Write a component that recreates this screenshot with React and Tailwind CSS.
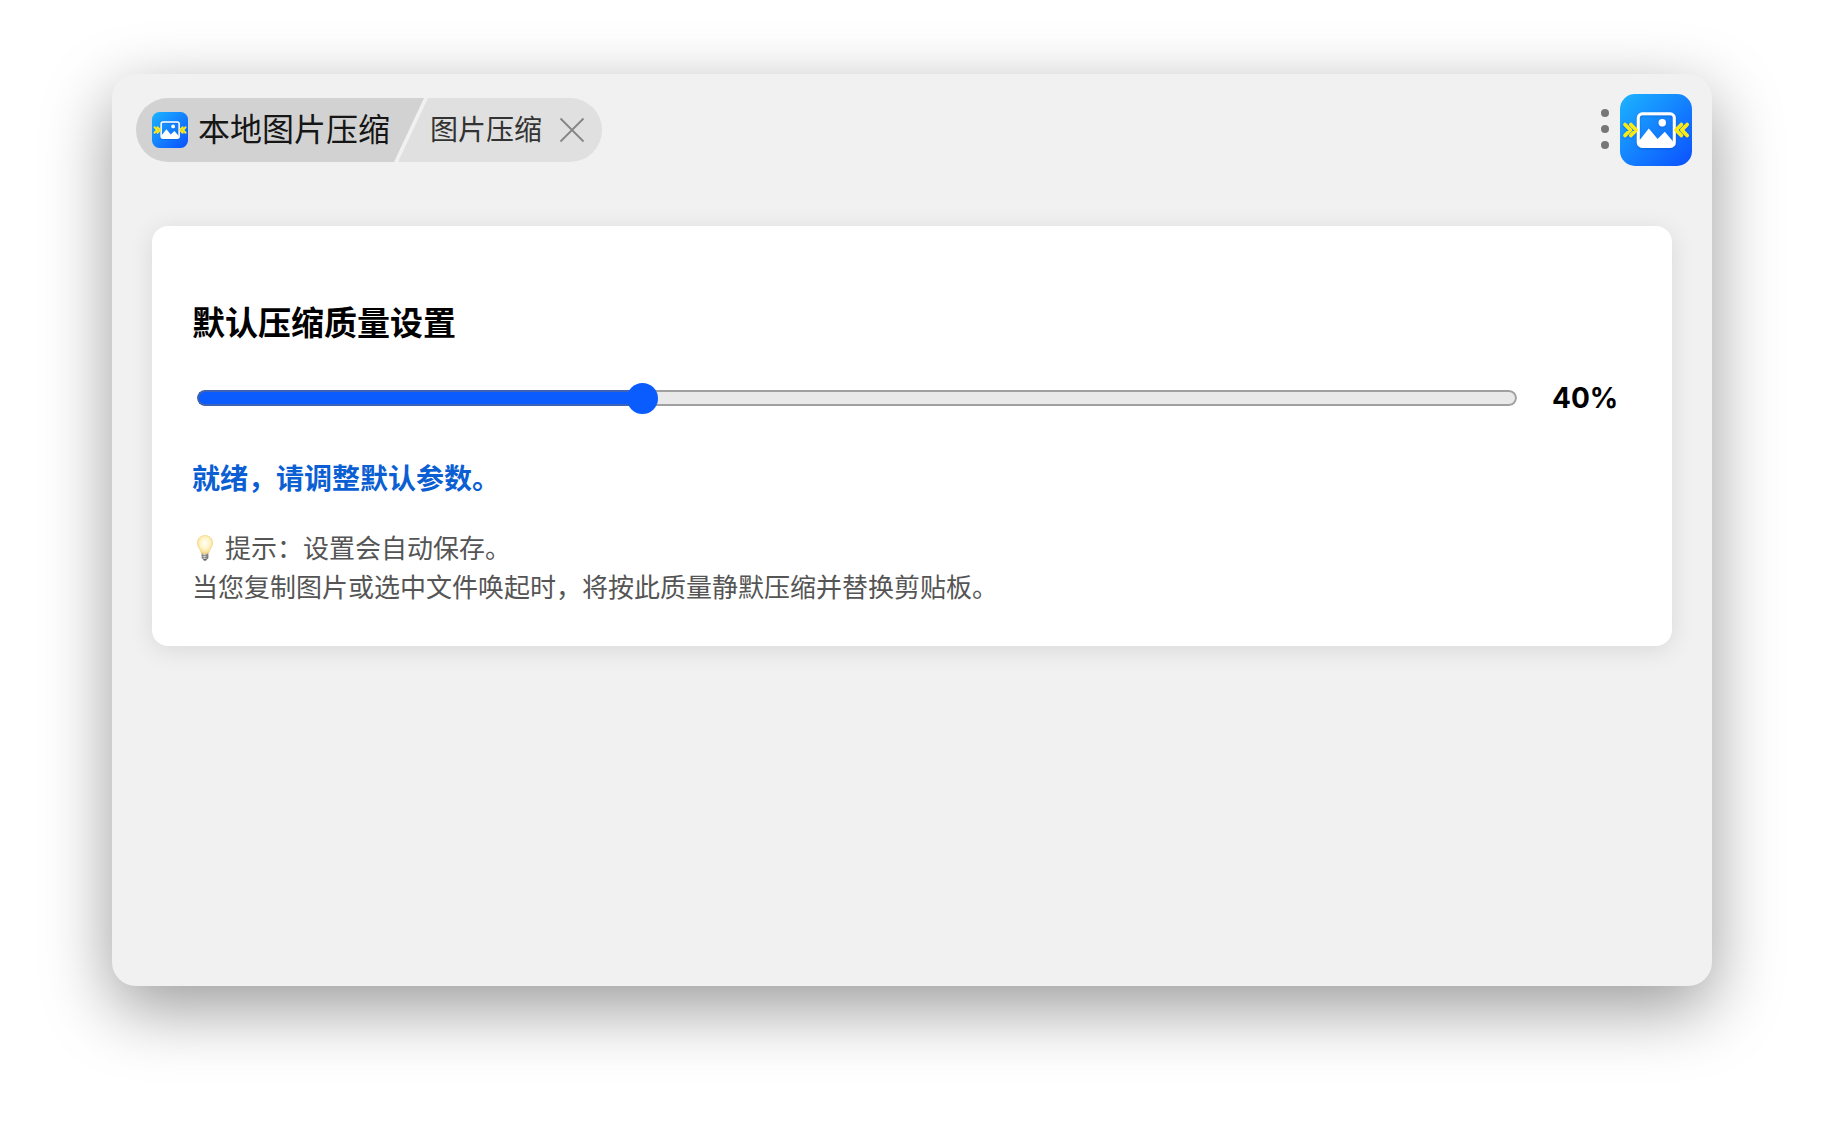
import { useState } from "react";

function AppIcon({ className, id }) {
  return (
    <svg viewBox="0 0 72 72" className={className} aria-hidden="true">
      <defs>
        <linearGradient id={id} x1="0" y1="0" x2="1" y2="1">
          <stop offset="0" stopColor="#1cb4ff" />
          <stop offset="1" stopColor="#0b50ff" />
        </linearGradient>
        <filter id={id + "-shadow"} x="-20%" y="-20%" width="140%" height="140%">
          <feDropShadow dx="0" dy="1" stdDeviation="1" floodColor="#003a9c" floodOpacity="0.4" />
        </filter>
      </defs>
      <rect width="72" height="72" rx="15" fill={`url(#${id})`} />
      <g filter={`url(#${id}-shadow)`}>
        <rect x="18.3" y="19.8" width="36" height="32.6" rx="4" fill="none" stroke="#fff" strokeWidth="3" />
        <circle cx="42.3" cy="28.8" r="3.7" fill="#fff" />
        <path d="M19 47 L28.8 34.6 L37.6 45 L44.8 37.8 L53.5 48 V52 H19 Z" fill="#fff" />
        <path
          d="M5 30.5 L10.4 36 L5 41.5 M10.8 30.5 L16.2 36 L10.8 41.5 M61.4 30.5 L56 36 L61.4 41.5 M67.2 30.5 L61.8 36 L67.2 41.5"
          fill="none"
          stroke="#fbec10"
          strokeWidth="3.6"
          strokeLinecap="round"
          strokeLinejoin="round"
        />
      </g>
    </svg>
  );
}

function BulbIcon() {
  return (
    <svg viewBox="0 0 26 28" className="mr-[7px] inline-block h-7 w-[26px] align-[-4px]" role="img" aria-label="灯泡">
      <defs>
        <radialGradient id="bulb-glass" cx="0.5" cy="0.42" r="0.58">
          <stop offset="0" stopColor="#fffef6" />
          <stop offset="0.5" stopColor="#fff6cc" />
          <stop offset="0.85" stopColor="#fae19a" />
          <stop offset="1" stopColor="#eec767" />
        </radialGradient>
        <linearGradient id="bulb-base" x1="0" y1="0" x2="1" y2="0">
          <stop offset="0" stopColor="#7d7d7d" />
          <stop offset="0.4" stopColor="#dcdcdc" />
          <stop offset="1" stopColor="#6b6b6b" />
        </linearGradient>
      </defs>
      <path
        d="M13 1.5 C8.4 1.5 5.4 4.8 5.4 9 C5.4 12.8 8.6 15.3 9.6 19.8 H16.4 C17.4 15.3 20.6 12.8 20.6 9 C20.6 4.8 17.6 1.5 13 1.5 Z"
        fill="url(#bulb-glass)"
        stroke="#efcf74"
        strokeWidth="0.6"
      />
      <path d="M9.7 19.8 H16.3 V24 Q16.3 25 15.2 25.3 H10.8 Q9.7 25 9.7 24 Z" fill="url(#bulb-base)" />
      <path d="M9.6 21.6 H16.4 M9.8 23.6 H16.2" stroke="#6e6e6e" strokeWidth="0.6" />
      <path d="M11 25.2 H15 L14.2 26.6 H11.8 Z" fill="#333" />
    </svg>
  );
}

function Header() {
  return (
    <header className="flex items-center justify-between pt-5 pr-5 pl-6">
      <div className="flex h-16 overflow-hidden rounded-full">
        <div className="flex items-center bg-[#d2d2d2] pr-[34px] pl-4 [clip-path:polygon(0_0,100%_0,calc(100%_-_30px)_100%,0_100%)]">
          <AppIcon id="tab-icon" className="size-9" />
          <span className="pl-[10px] text-[32px] leading-10 text-[#161616]">本地图片压缩</span>
        </div>
        <div className="-ml-[26px] flex items-center bg-[#e0e0e0] pr-4 pl-8 [clip-path:polygon(30px_0,100%_0,100%_100%,0_100%)]">
          <span className="text-[28px] leading-10 text-[#333]">图片压缩</span>
          <button type="button" aria-label="关闭" className="ml-4 flex size-7 items-center justify-center">
            <svg viewBox="0 0 28 28" className="size-7" fill="none" stroke="#858585" strokeWidth="1.8">
              <path d="M2.5 2.5 L25.5 25.5 M25.5 2.5 L2.5 25.5" />
            </svg>
          </button>
        </div>
      </div>
      <div className="flex items-center gap-2">
        <button type="button" aria-label="更多" className="flex w-[14px] flex-col items-center gap-2 pb-0.5">
          <span className="size-2 rounded-full bg-[#777]" />
          <span className="size-2 rounded-full bg-[#777]" />
          <span className="size-2 rounded-full bg-[#777]" />
        </button>
        <AppIcon id="app-icon" className="size-[72px]" />
      </div>
    </header>
  );
}

const MIN = 10;
const MAX = 100;

function QualitySlider({ value, onChange }) {
  const filled = ((value - MIN) / (MAX - MIN)) * 100;
  return (
    <div className="mx-[5px] grid h-8 flex-1 items-center">
      <div className="col-start-1 row-start-1 grid h-4 overflow-hidden rounded-full">
        <div className="col-start-1 row-start-1 rounded-full border-2 border-[#a0a0a0] bg-[#e9e9e9]" />
        <div
          className="col-start-1 row-start-1 rounded-l-full border-y-2 border-l-2 border-[#3f62b4] bg-[#0a5cff]"
          style={{ width: `${filled}%` }}
        />
      </div>
      <input
        id="quality"
        type="range"
        min={MIN}
        max={MAX}
        value={value}
        onChange={(e) => onChange(Number(e.target.value))}
        className="relative col-start-1 row-start-1 h-8 w-full cursor-pointer appearance-none bg-transparent [&::-webkit-slider-thumb]:size-[31px] [&::-webkit-slider-thumb]:appearance-none [&::-webkit-slider-thumb]:rounded-full [&::-webkit-slider-thumb]:bg-[#0a5cff]"
      />
    </div>
  );
}

export default function App() {
  const [quality, setQuality] = useState(40);
  return (
    <div
      lang="zh-CN"
      className="min-h-screen bg-white px-28 pt-[74px] pb-[150px] font-['Inter','Noto_Sans_CJK_SC',sans-serif]"
    >
      <main className="flex min-h-[912px] flex-col rounded-3xl bg-[#f1f1f1] shadow-[0_22px_68px_rgba(0,0,0,0.4)]">
        <Header />
        <section className="mx-10 mt-15 rounded-2xl bg-white px-10 pt-[73px] pb-[39px] shadow-[0_4px_24px_rgba(0,0,0,0.1)]">
          <h3 className="text-[33px] leading-[48px] font-bold text-black">
            <label htmlFor="quality">默认压缩质量设置</label>
          </h3>
          <div className="mt-[35px] flex items-center gap-[30px]">
            <QualitySlider value={quality} onChange={setQuality} />
            <output htmlFor="quality" className="w-20 text-[28px] leading-8 font-bold text-black">
              {quality}%
            </output>
          </div>
          <p className="mt-[45px] text-[28px] leading-10 font-bold text-[#0b5fd2]">就绪，请调整默认参数。</p>
          <p className="mt-[30px] text-[26px] leading-[39px] text-[#555]">
            <BulbIcon />
            提示：设置会自动保存。
            <br />
            当您复制图片或选中文件唤起时，将按此质量静默压缩并替换剪贴板。
          </p>
        </section>
      </main>
    </div>
  );
}
